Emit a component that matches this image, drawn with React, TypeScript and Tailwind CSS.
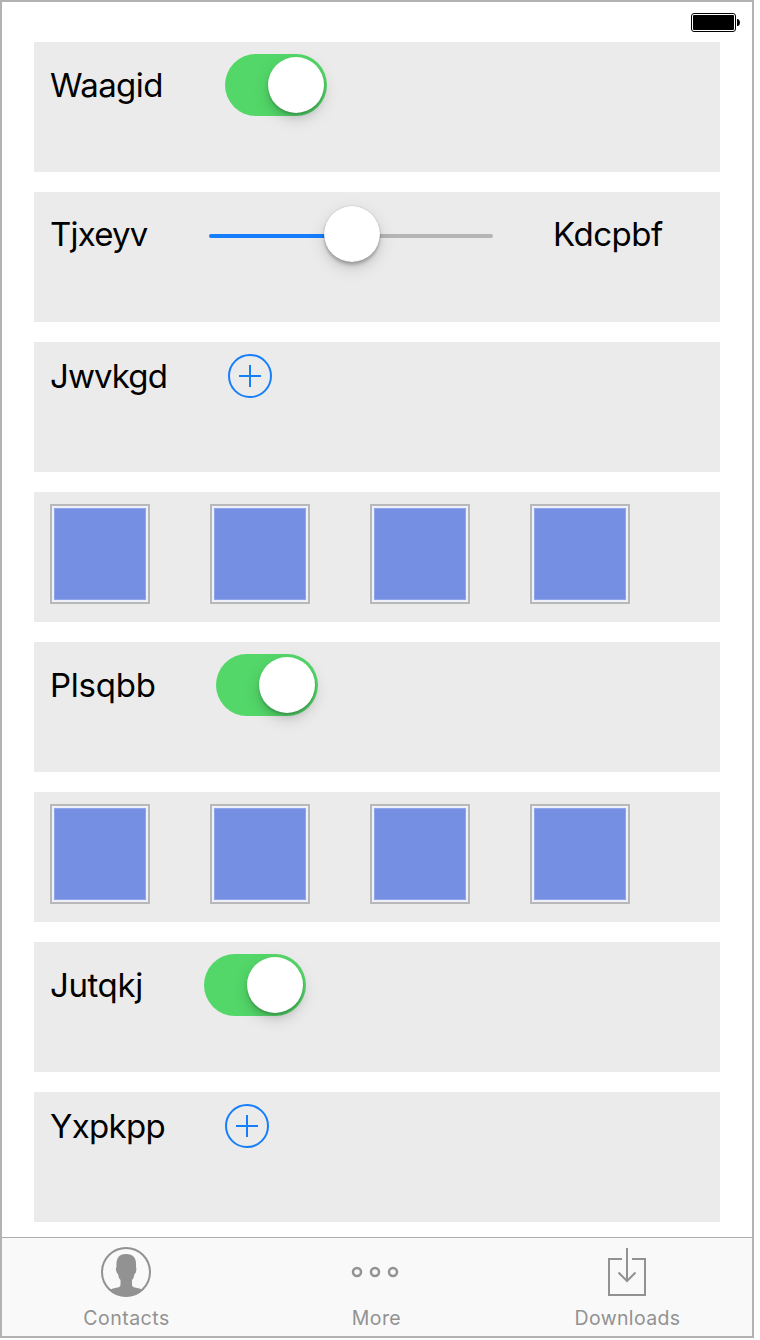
import React from 'react';

function Row({ height, children }: { height: string; children: React.ReactNode }) {
  return (
    <section className="h-[130px] w-[686px] shrink-0 bg-[#ebebeb] pt-3 pl-4">
      <div className={`flex items-center ${height}`}>{children}</div>
    </section>
  );
}

function Label({ text, className }: { text: string; className: string }) {
  return (
    <span className={`shrink-0 whitespace-nowrap text-[33px] leading-[40px] text-black ${className}`}>{text}</span>
  );
}

function Toggle() {
  return (
    <button aria-pressed="true" className="flex h-[62px] w-[102px] shrink-0 items-center justify-end rounded-full bg-[#53d769] pr-[3px]">
      <span className="size-14 rounded-full bg-white shadow-[0_6px_16px_rgba(0,0,0,0.15),0_2px_2px_rgba(0,0,0,0.16),0_6px_6px_rgba(0,0,0,0.06)]" />
    </button>
  );
}

function AddButton() {
  return (
    <button className="size-11 shrink-0">
      <svg width="44" height="44" viewBox="0 0 44 44" fill="none" stroke="#157efb" strokeWidth="2">
        <circle cx="22" cy="22" r="21" />
        <path d="M11 22h22M22 11v22" />
      </svg>
    </button>
  );
}

function Slider() {
  return (
    <div className="flex w-[284px] shrink-0 items-center">
      <span className="mt-1 h-1 w-[119px] rounded-l-full bg-[#157efb]" />
      <span className="z-10 -mx-1 size-14 rounded-full bg-white shadow-[0_0_1px_rgba(0,0,0,0.35),0_6px_18px_rgba(0,0,0,0.13),0_3px_3px_rgba(0,0,0,0.2),0_6px_6px_rgba(0,0,0,0.06)]" />
      <span className="mt-1 h-1 w-[117px] rounded-r-full bg-[#b5b5b5]" />
    </div>
  );
}

function Thumbnails() {
  return (
    <div className="flex gap-[60px]">
      {[0, 1, 2, 3].map((i) => (
        <div key={i} className="size-[100px] border-2 border-[#b8b8b8] bg-[#eef0fa] p-[2px]">
          <div className="size-full border border-[#8fa3e8] bg-[#758fe2]" />
        </div>
      ))}
    </div>
  );
}

function Battery() {
  return (
    <svg width="50" height="20" viewBox="0 0 50 20">
      <rect x="1.5" y="1.5" width="44" height="18" rx="2.5" fill="#fff" stroke="#000" />
      <rect x="3" y="3" width="41" height="15" rx="1" fill="#000" />
      <path d="M47 7h1q2 1 2 3.500t-2 3.500h-1z" fill="#000" />
    </svg>
  );
}

function Tab({ text, className, children }: { text: string; className: string; children: React.ReactNode }) {
  return (
    <button className={`flex shrink-0 flex-col items-center text-[#929292] ${className}`}>
      <span className="mt-[8px] flex h-[52px] items-center">{children}</span>
      <span className="mt-[8px] pl-px text-[19.500px] leading-6">{text}</span>
    </button>
  );
}

export default function App() {
  return (
    <div className="h-[1340px] w-[760px] bg-white font-['Inter',sans-serif]">
      <main className="flex h-[1338px] w-[754px] flex-col border-2 border-[#b2b2b2] bg-white">
        <header className="flex h-10 shrink-0 justify-end pt-[10px] pr-3">
          <Battery />
        </header>
        <div className="flex h-[1195px] shrink-0 flex-col gap-5 pl-8">
          <Row height="h-[62px]">
            <Label text="Waagid" className="w-[175px] tracking-[-0.6px]" />
            <Toggle />
          </Row>
          <Row height="h-[60px]">
            <Label text="Tjxeyv" className="w-[159px] tracking-[-0.8px]" />
            <Slider />
            <Label text="Kdcpbf" className="ml-[60px] w-[120px] tracking-[-0.45px]" />
          </Row>
          <Row height="h-11">
            <Label text="Jwvkgd" className="w-[178px] tracking-[-0.9px]" />
            <AddButton />
          </Row>
          <Row height="h-[100px]">
            <Thumbnails />
          </Row>
          <Row height="h-[62px]">
            <Label text="Plsqbb" className="w-[166px] tracking-[-0.25px]" />
            <Toggle />
          </Row>
          <Row height="h-[100px]">
            <Thumbnails />
          </Row>
          <Row height="h-[62px]">
            <Label text="Jutqkj" className="w-[154px] tracking-[-0.4px]" />
            <Toggle />
          </Row>
          <Row height="h-11">
            <Label text="Yxpkpp" className="w-[175px] tracking-[-0.7px]" />
            <AddButton />
          </Row>
        </div>
        <nav className="flex h-[99px] shrink-0 border-t border-[#adadad] bg-[#f9f9f9]">
          <Tab text="Contacts" className="w-[248px] tracking-[0.5px]">
            <svg width="52" height="52" viewBox="0 0 52 52">
              <circle cx="26" cy="26" r="24" fill="none" stroke="currentColor" strokeWidth="2" />
              <path fill="currentColor" d="M9.500 44q3-2 8-2.500 3-.500 3-3v-4.500q-2-2-2.500-6-1.500-.500-2-4-.300-2 .500-3-.500-7 2-10 2-3 7.500-3t8 3q2.500 3 2 10 .500 1 .300 3-.300 3.500-1.800 4-.500 4-2.500 6v4.500q0 2.500 3 3 5 .500 8 2.500-7 6.500-16.500 6.500T9.500 44z" />
            </svg>
          </Tab>
          <Tab text="More" className="w-[252px] tracking-[0.4px]">
            <svg className="mr-[2px]" width="48" height="12" viewBox="0 0 48 12" fill="none" stroke="currentColor" strokeWidth="2.500">
              <circle cx="6" cy="6" r="4" />
              <circle cx="24" cy="6" r="4" />
              <circle cx="42" cy="6" r="4" />
            </svg>
          </Tab>
          <Tab text="Downloads" className="w-[250px] tracking-[0.35px]">
            <svg width="40" height="50" viewBox="0 0 40 50" fill="none" stroke="currentColor" strokeWidth="2">
              <path d="M15 12H2v36h36V12H25M20 1v33M11.500 25.500l8.500 8.500 8.500-8.500" />
            </svg>
          </Tab>
        </nav>
      </main>
    </div>
  );
}
